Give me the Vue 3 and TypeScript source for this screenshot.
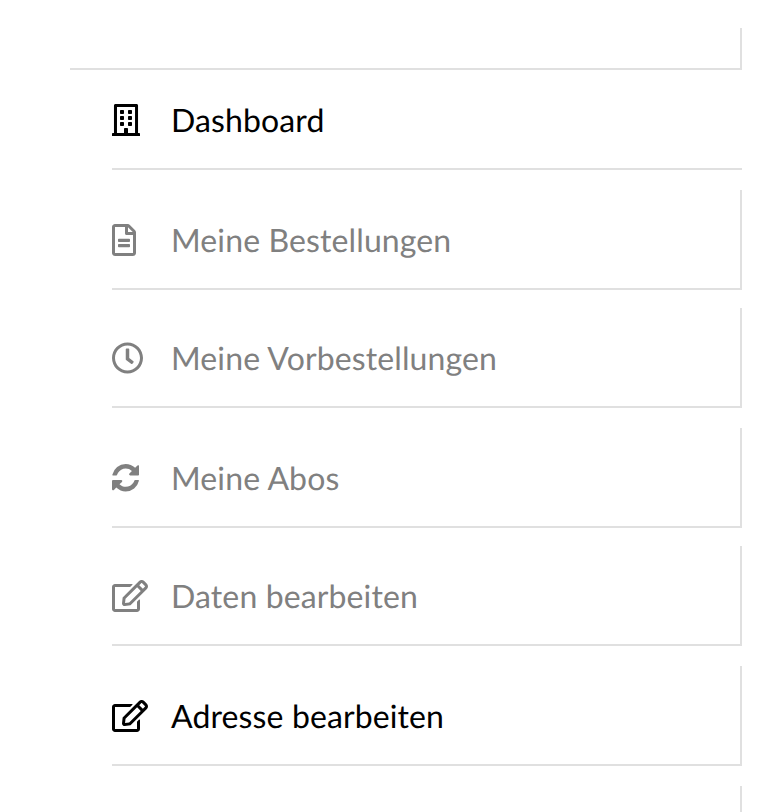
<template>
  <div class="page">
    <div class="top-box"></div>
    <ul class="menu">
      <li
        v-for="item in items"
        :key="item.label"
        class="row"
        :class="{ active: item.active, framed: item.label !== 'Dashboard' }"
      >
        <span class="slot">
          <svg class="icon" :viewBox="item.box" :width="item.w" :height="item.h" fill="currentColor">
            <path :d="item.d" />
          </svg>
        </span>
        <span class="label">{{ item.label }}</span>
      </li>
      <li class="row framed"></li>
    </ul>
  </div>
</template>

<script setup lang="ts">
interface Item {
  label: string
  active?: boolean
  box: string
  w: number
  h: number
  d: string
}

const editIcon =
  'M402.3 344.9l32-32c5-5 13.7-1.5 13.7 5.7V464c0 26.5-21.5 48-48 48H48c-26.5 0-48-21.5-48-48V112c0-26.5 21.5-48 48-48h273.5c7.1 0 10.7 8.6 5.7 13.7l-32 32c-1.5 1.5-3.5 2.3-5.7 2.3H48v352h352V350.5c0-2.1.8-4.1 2.3-5.6zm156.6-201.8L296.3 405.7l-90.4 10c-26.2 2.9-48.5-19.2-45.6-45.6l10-90.4L432.9 17.1c22.9-22.9 59.9-22.9 82.7 0l43.2 43.2c22.9 22.9 22.9 60 .1 82.8zM460.1 174L402 115.9 216.2 301.8l-7.3 65.3 65.3-7.3L460.1 174zm64.8-79.7l-43.2-43.2c-4.1-4.1-10.8-4.1-14.8 0L436 82l58.1 58.1 30.9-30.9c4-4.2 4-10.8-.1-14.9z'

const items: Item[] = [
  {
    label: 'Dashboard',
    active: true,
    box: '0 0 448 512',
    w: 28,
    h: 32,
    d: 'M128 148v-40c0-6.6 5.4-12 12-12h40c6.6 0 12 5.4 12 12v40c0 6.6-5.4 12-12 12h-40c-6.6 0-12-5.4-12-12zm140 12h40c6.6 0 12-5.4 12-12v-40c0-6.6-5.4-12-12-12h-40c-6.6 0-12 5.4-12 12v40c0 6.6 5.4 12 12 12zm-128 96h40c6.6 0 12-5.4 12-12v-40c0-6.6-5.4-12-12-12h-40c-6.6 0-12 5.4-12 12v40c0 6.6 5.4 12 12 12zm128 0h40c6.6 0 12-5.4 12-12v-40c0-6.6-5.4-12-12-12h-40c-6.6 0-12 5.4-12 12v40c0 6.6 5.4 12 12 12zm-76 84v-40c0-6.6-5.4-12-12-12h-40c-6.6 0-12 5.4-12 12v40c0 6.6 5.4 12 12 12h40c6.6 0 12-5.4 12-12zm76 12h40c6.6 0 12-5.4 12-12v-40c0-6.6-5.4-12-12-12h-40c-6.6 0-12 5.4-12 12v40c0 6.6 5.4 12 12 12zm180 124v36H0v-36c0-6.6 5.4-12 12-12h19.5V24c0-13.3 10.7-24 24-24h337c13.3 0 24 10.7 24 24v440H436c6.6 0 12 5.4 12 12zM79.5 463H192v-67c0-6.6 5.4-12 12-12h40c6.6 0 12 5.4 12 12v67h112.5V49L80 48l-.5 415z'
  },
  {
    label: 'Meine Bestellungen',
    box: '0 0 384 512',
    w: 24,
    h: 32,
    d: 'M288 248v28c0 6.6-5.4 12-12 12H108c-6.6 0-12-5.4-12-12v-28c0-6.6 5.4-12 12-12h168c6.6 0 12 5.4 12 12zm-12 72H108c-6.6 0-12 5.4-12 12v28c0 6.6 5.4 12 12 12h168c6.6 0 12-5.4 12-12v-28c0-6.6-5.4-12-12-12zm108-188.1V464c0 26.5-21.5 48-48 48H48c-26.5 0-48-21.5-48-48V48C0 21.5 21.5 0 48 0h204.1C264.8 0 277 5.1 286 14.1L369.9 98c9 8.9 14.1 21.2 14.1 33.9zm-128-80V128h76.1L256 51.9zM336 464V176H232c-13.3 0-24-10.7-24-24V48H48v416h288z'
  },
  {
    label: 'Meine Vorbestellungen',
    box: '8 0 496 512',
    w: 31,
    h: 32,
    d: 'M256 8C119 8 8 119 8 256s111 248 248 248 248-111 248-248S393 8 256 8zm0 448c-110.5 0-200-89.5-200-200S145.5 56 256 56s200 89.5 200 200-89.5 200-200 200zm61.8-104.4l-84.9-61.7c-3.1-2.3-4.9-5.9-4.9-9.7V116c0-6.6 5.4-12 12-12h32c6.6 0 12 5.4 12 12v141.7l66.8 48.6c5.4 3.9 6.5 11.4 2.6 16.8L334.6 349c-3.9 5.3-11.4 6.5-16.8 2.6z'
  },
  {
    label: 'Meine Abos',
    box: '128 128 1536 1536',
    w: 27.4,
    h: 27.4,
    d: 'M1639 1056q0 5-1 7-64 268-268 434.5t-478 166.5q-146 0-282.5-55t-243.5-157l-129 129q-19 19-45 19t-45-19-19-45v-448q0-26 19-45t45-19h448q26 0 45 19t19 45-19 45l-137 137q71 66 161 102t187 36q134 0 250-65t186-179q11-17 53-117 8-23 30-23h192q13 0 22.5 9.5t9.5 22.5zm25-800v448q0 26-19 45t-45 19h-448q-26 0-45-19t-19-45 19-45l138-138q-148-137-349-137-134 0-250 65t-186 179q-11 17-53 117-8 23-30 23h-199q-13 0-22.5-9.5t-9.5-22.5v-7q65-268 270-434.5t480-166.5q146 0 284 55.5t245 156.5l130-129q19-19 45-19t45 19 19 45z'
  },
  { label: 'Daten bearbeiten', box: '0 0 576 512', w: 36, h: 32, d: editIcon },
  { label: 'Adresse bearbeiten', active: true, box: '0 0 576 512', w: 36, h: 32, d: editIcon }
]
</script>

<style scoped>
.page {
  height: 812px;
  overflow: hidden;
  padding: 28px 32px 0 70px;
  box-sizing: border-box;
  font-family: Lato, "Liberation Sans", sans-serif;
  text-rendering: geometricPrecision;
}

.top-box {
  height: 42px;
  box-sizing: border-box;
  border-right: 2px solid #e0e0e0;
  border-bottom: 2px solid #e0e0e0;
}

.menu {
  list-style: none;
  margin: 0 0 0 42px;
  padding: 0;
}

.row {
  height: 100px;
  box-sizing: border-box;
  display: flex;
  align-items: center;
  padding-top: 2px;
  border-bottom: 2px solid #e0e0e0;
  color: #808080;
}

.row:nth-child(even) {
  margin-top: 20px;
}

.row:nth-child(odd) {
  margin-top: 18px;
}

.row:first-child {
  margin-top: 0;
}

.row:last-child {
  margin-top: 20px;
}

.row.framed {
  border-right: 2px solid #e0e0e0;
}

.row.active {
  color: #000;
}

.slot {
  flex: none;
  width: 59px;
}

.icon {
  display: block;
}

.label {
  font-size: 32px;
  line-height: 40px;
  letter-spacing: 0.12px;
  white-space: nowrap;
}
</style>

<style>
html,
body {
  margin: 0;
  overflow: hidden;
  background: #fff;
}
</style>
